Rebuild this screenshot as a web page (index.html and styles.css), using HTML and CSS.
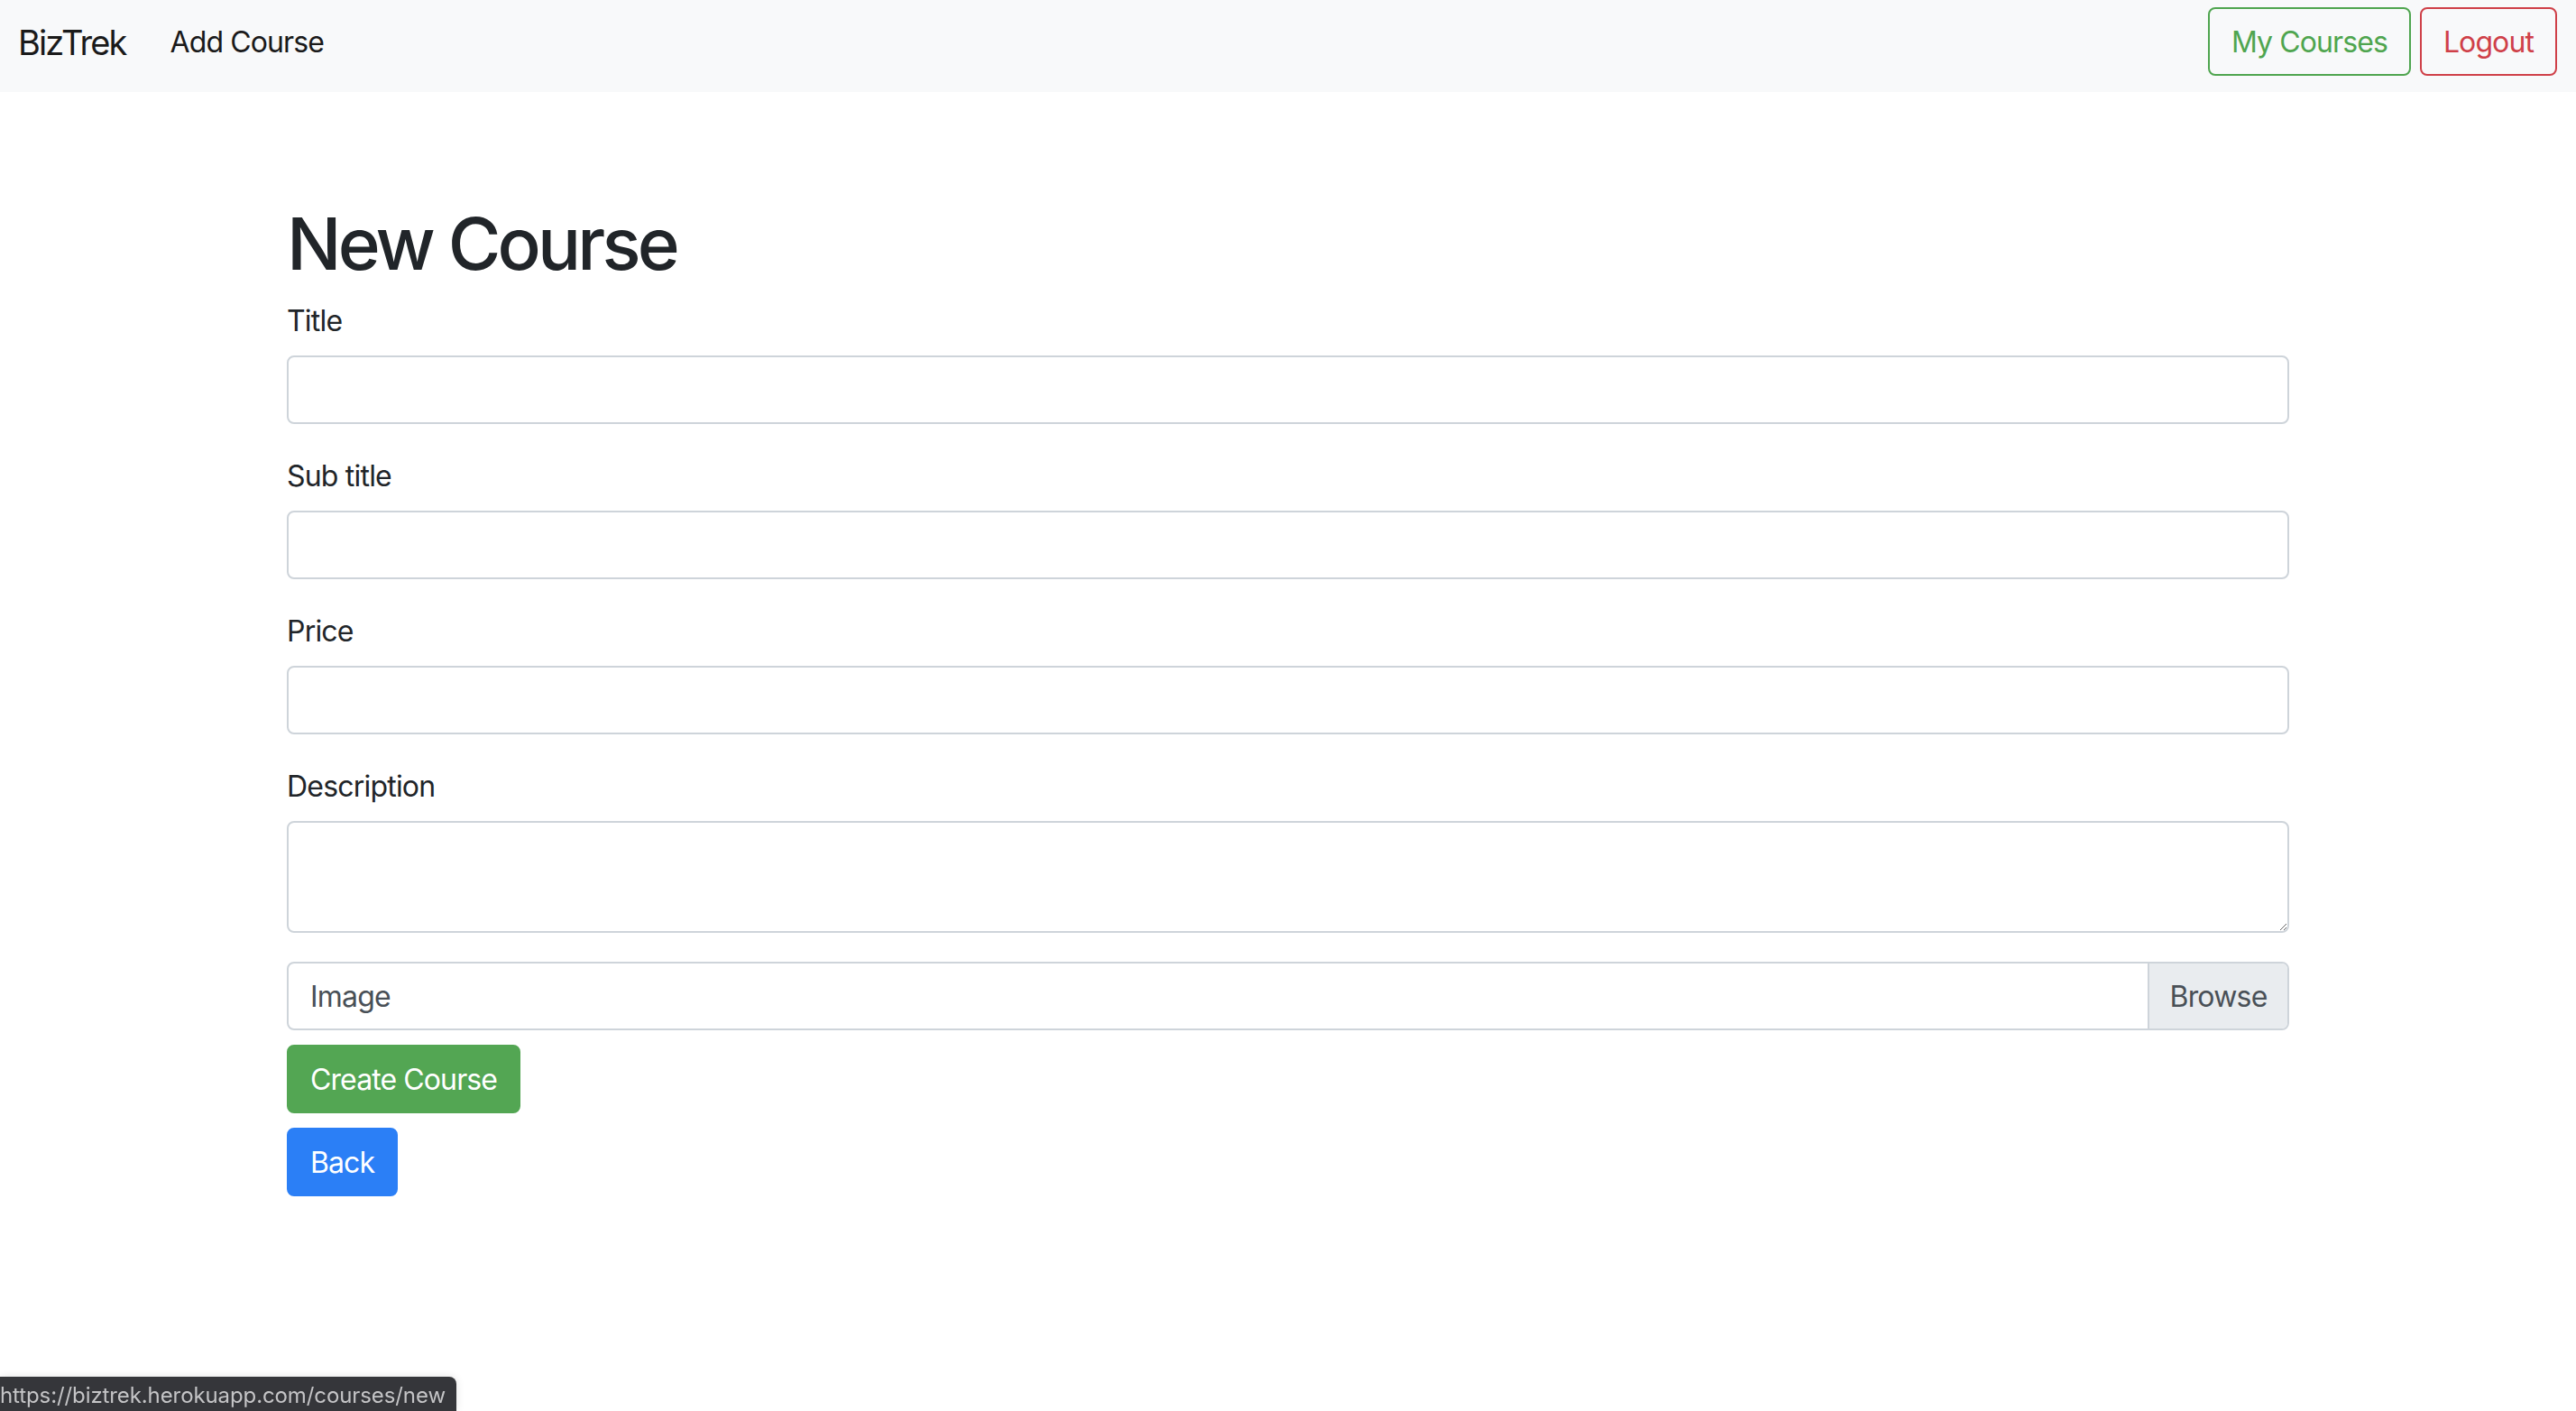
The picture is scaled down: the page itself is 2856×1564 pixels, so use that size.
FILE: index.html
```html
<!DOCTYPE html>
<html lang="en">
<head>
<meta charset="utf-8">
<title>BizTrek - New Course</title>
<link rel="stylesheet" href="styles.css">
</head>
<body>
<nav class="navbar">
  <a class="brand" href="#">BizTrek</a>
  <a class="nav-link" href="#">Add Course</a>
  <div class="nav-right">
    <a class="btn btn-outline-success" href="#">My Courses</a>
    <a class="btn btn-outline-danger" href="#">Logout</a>
  </div>
</nav>
<main class="container">
  <h1 class="page-title">New Course</h1>
  <form class="course-form">
    <div class="group">
      <label class="field-label" for="title">Title</label>
      <input class="control" id="title" type="text">
    </div>
    <div class="group">
      <label class="field-label" for="subtitle">Sub title</label>
      <input class="control" id="subtitle" type="text">
    </div>
    <div class="group">
      <label class="field-label" for="price">Price</label>
      <input class="control" id="price" type="text">
    </div>
    <div class="group">
      <label class="field-label" for="desc">Description</label>
      <textarea class="control textarea" id="desc"></textarea>
    </div>
    <div class="file-input">
      <span class="file-label">Image</span>
      <span class="file-browse">Browse</span>
    </div>
    <div class="actions">
      <button class="btn btn-success" type="button">Create Course</button>
      <a class="btn btn-primary" href="#">Back</a>
    </div>
  </form>
</main>
<div class="statusbar">https://biztrek.herokuapp.com/courses/new</div>
</body>
</html>
```
FILE: styles.css
```css
* { box-sizing: border-box; }
html, body { margin: 0; padding: 0; background: #fff; }
body {
  font-family: Inter, "Liberation Sans", Arial, sans-serif;
  color: #212529;
  font-size: 32px;
  line-height: 48px;
}
a { text-decoration: none; }

.navbar {
  display: flex;
  align-items: center;
  height: 102px;
  padding: 8px 21px 18px 20px;
  background: #f8f9fa;
}
.brand {
  font-size: 38px;
  line-height: 60px;
  padding-top: 2px;
  letter-spacing: -1.9px;
  color: #1a1a1a;
  margin-right: 49px;
}
.nav-link {
  font-size: 32px;
  line-height: 48px;
  padding-top: 2px;
  letter-spacing: -0.9px;
  color: #1a1a1a;
}
.nav-right {
  margin-left: auto;
  display: flex;
  gap: 10px;
}

.btn {
  display: inline-block;
  font-family: Inter, "Liberation Sans", Arial, sans-serif;
  font-size: 32px;
  line-height: 48px;
  letter-spacing: -0.9px;
  padding: 13px 24px 11px;
  border: 2px solid transparent;
  border-radius: 8px;
  background: transparent;
  cursor: pointer;
}
.btn-outline-success { color: #4fa54f; border-color: #4fa54f; }
.btn-outline-danger { color: #cf4048; border-color: #cf4048; }
.btn-success { background: #53a653; border-color: #53a653; color: #fff; }
.btn-primary { background: #2b7ff6; border-color: #2b7ff6; color: #fff; }

.container {
  width: 2220px;
  margin: 0 auto;
  padding-top: 120px;
}
.page-title {
  font-size: 80px;
  font-weight: 500;
  line-height: 96px;
  letter-spacing: -3.8px;
  margin: 0 0 12px;
  color: #212529;
}
.group { margin-bottom: 32px; }
.field-label {
  display: block;
  font-size: 32px;
  line-height: 48px;
  letter-spacing: -0.8px;
  padding-top: 2px;
  margin-bottom: 14px;
  color: #212529;
}
.control {
  display: block;
  width: 100%;
  height: 76px;
  border: 2px solid #ced4da;
  border-radius: 8px;
  background: #fff;
  font: inherit;
  padding: 12px 24px;
  color: #495057;
}
.textarea {
  height: 124px;
  resize: vertical;
}

.file-input {
  display: flex;
  height: 76px;
  border: 2px solid #ced4da;
  border-radius: 8px;
  margin-bottom: 16px;
  overflow: hidden;
  color: #495057;
}
.file-label {
  flex: 1;
  padding: 2px 24px 0;
  line-height: 70px;
  letter-spacing: -0.8px;
}
.file-browse {
  width: 155px;
  text-align: center;
  padding-top: 2px;
  line-height: 70px;
  letter-spacing: -0.8px;
  background: #e9ecef;
  border-left: 2px solid #ced4da;
}

.actions {
  display: flex;
  flex-direction: column;
  align-items: flex-start;
  gap: 16px;
}

.statusbar {
  position: fixed;
  left: 0;
  bottom: 0;
  width: 506px;
  height: 38px;
  padding-top: 3px;
  background: #35363a;
  color: #c4c4c6;
  font-size: 24px;
  line-height: 35px;
  letter-spacing: -0.1px;
  border-top-right-radius: 8px;
  box-shadow: 0 0 10px rgba(0,0,0,0.12);
  white-space: nowrap;
  overflow: hidden;
}
```
